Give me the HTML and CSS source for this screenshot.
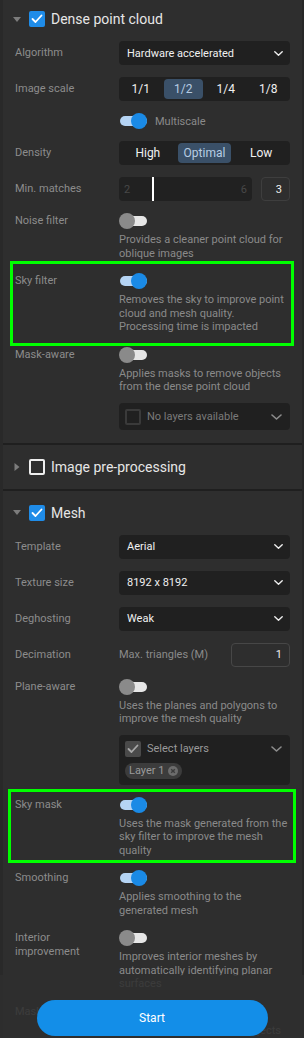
FILE: index.html
```html
<!DOCTYPE html>
<html lang="en">
<head>
  <meta charset="UTF-8" />
  <title>Processing options</title>
  <link rel="stylesheet" href="styles.css">
</head>
<body>
  <div class="panel">

    <!-- Dense point cloud -->
    <section class="section">
      <div class="section-head">
        <svg class="caret" width="8" height="5" viewBox="0 0 8 5"><polygon points="0,0 8,0 4,5" /></svg>
        <span class="check on"><svg width="12" height="10" viewBox="0 0 12 10"><polyline points="1.5,5 4.5,8 10.5,1.5" /></svg></span>
        <span class="section-title">Dense point cloud</span>
      </div>
      <div class="rows">
        <div class="row mid">
          <div class="label">Algorithm</div>
          <div class="control">
            <div class="select"><span>Hardware accelerated</span><svg class="chev" width="9" height="5" viewBox="0 0 9 5"><polyline points="0.8,0.8 4.5,4.2 8.2,0.8" /></svg></div>
          </div>
        </div>
        <div class="row mid">
          <div class="label">Image scale</div>
          <div class="control">
            <div class="segmented four">
              <span>1/1</span><span class="active">1/2</span><span>1/4</span><span>1/8</span>
            </div>
          </div>
        </div>
        <div class="row mid">
          <div class="label"></div>
          <div class="control inline">
            <span class="toggle on"><span class="knob"></span></span>
            <span class="inline-text">Multiscale</span>
          </div>
        </div>
        <div class="row mid">
          <div class="label">Density</div>
          <div class="control">
            <div class="segmented three">
              <span>High</span><span class="active">Optimal</span><span>Low</span>
            </div>
          </div>
        </div>
        <div class="row mid">
          <div class="label">Min. matches</div>
          <div class="control inline">
            <div class="slider">
              <span class="tick">2</span>
              <span class="thumb"></span>
              <span class="tick">6</span>
            </div>
            <div class="number small">3</div>
          </div>
        </div>
        <div class="row">
          <div class="label">Noise filter</div>
          <div class="control">
            <span class="toggle"><span class="knob"></span></span>
            <p class="desc">Provides a cleaner point cloud for oblique images</p>
          </div>
        </div>
        <div class="row highlight hl-sky">
          <div class="label">Sky filter</div>
          <div class="control">
            <span class="toggle on"><span class="knob"></span></span>
            <p class="desc">Removes the sky to improve point cloud and mesh quality. Processing time is impacted</p>
          </div>
        </div>
        <div class="row">
          <div class="label">Mask-aware</div>
          <div class="control">
            <span class="toggle"><span class="knob"></span></span>
            <p class="desc">Applies masks to remove objects from the dense point cloud</p>
            <div class="layers disabled">
              <div class="layers-top">
                <span class="check empty"></span>
                <span class="layers-text">No layers available</span>
                <svg class="chev big" width="11" height="6" viewBox="0 0 11 6"><polyline points="1,1 5.5,5 10,1" /></svg>
              </div>
            </div>
          </div>
        </div>
      </div>
    </section>

    <!-- Image pre-processing -->
    <section class="section">
      <div class="section-head">
        <svg class="caret" width="8" height="8" viewBox="0 0 8 8"><polygon points="1.5,0 6.5,4 1.5,8" /></svg>
        <span class="check off"></span>
        <span class="section-title">Image pre-processing</span>
      </div>
    </section>

    <!-- Mesh -->
    <section class="section">
      <div class="section-head">
        <svg class="caret" width="8" height="5" viewBox="0 0 8 5"><polygon points="0,0 8,0 4,5" /></svg>
        <span class="check on"><svg width="12" height="10" viewBox="0 0 12 10"><polyline points="1.5,5 4.5,8 10.5,1.5" /></svg></span>
        <span class="section-title">Mesh</span>
      </div>
      <div class="rows">
        <div class="row mid">
          <div class="label">Template</div>
          <div class="control">
            <div class="select"><span>Aerial</span><svg class="chev" width="9" height="5" viewBox="0 0 9 5"><polyline points="0.8,0.8 4.5,4.2 8.2,0.8" /></svg></div>
          </div>
        </div>
        <div class="row mid">
          <div class="label">Texture size</div>
          <div class="control">
            <div class="select"><span>8192 x 8192</span><svg class="chev" width="9" height="5" viewBox="0 0 9 5"><polyline points="0.8,0.8 4.5,4.2 8.2,0.8" /></svg></div>
          </div>
        </div>
        <div class="row mid">
          <div class="label">Deghosting</div>
          <div class="control">
            <div class="select"><span>Weak</span><svg class="chev" width="9" height="5" viewBox="0 0 9 5"><polyline points="0.8,0.8 4.5,4.2 8.2,0.8" /></svg></div>
          </div>
        </div>
        <div class="row mid">
          <div class="label">Decimation</div>
          <div class="control inline spread">
            <span class="inline-text flat">Max. triangles (M)</span>
            <div class="number wide">1</div>
          </div>
        </div>
        <div class="row">
          <div class="label">Plane-aware</div>
          <div class="control">
            <span class="toggle"><span class="knob"></span></span>
            <p class="desc">Uses the planes and polygons to improve the mesh quality</p>
            <div class="layers">
              <div class="layers-top">
                <span class="check grey"><svg width="12" height="10" viewBox="0 0 12 10"><polyline points="1.5,5 4.5,8 10.5,1.5" /></svg></span>
                <span class="layers-text">Select layers</span>
                <svg class="chev big" width="11" height="6" viewBox="0 0 11 6"><polyline points="1,1 5.5,5 10,1" /></svg>
              </div>
              <span class="chip">Layer 1
                <svg width="10" height="10" viewBox="0 0 10 10"><circle cx="5" cy="5" r="5" /><path d="M3.2 3.2 L6.8 6.8 M6.8 3.2 L3.2 6.8" /></svg>
              </span>
            </div>
          </div>
        </div>
        <div class="row highlight hl-mask">
          <div class="label">Sky mask</div>
          <div class="control">
            <span class="toggle on"><span class="knob"></span></span>
            <p class="desc">Uses the mask generated from the sky filter to improve the mesh quality</p>
          </div>
        </div>
        <div class="row">
          <div class="label">Smoothing</div>
          <div class="control">
            <span class="toggle on"><span class="knob"></span></span>
            <p class="desc">Applies smoothing to the generated mesh</p>
          </div>
        </div>
        <div class="row">
          <div class="label">Interior improvement</div>
          <div class="control">
            <span class="toggle"><span class="knob"></span></span>
            <p class="desc">Improves interior meshes by automatically identifying planar surfaces</p>
          </div>
        </div>
        <div class="row">
          <div class="label">Mask-aware</div>
          <div class="control">
            <span class="toggle"><span class="knob"></span></span>
            <p class="desc">Applies masks to remove objects</p>
          </div>
        </div>
      </div>
    </section>
  </div>

  <div class="footer">
    <button class="start" type="button">Start</button>
  </div>
</body>
</html>
```

FILE: styles.css
```css
* {
  box-sizing: border-box;
}

html, body {
  margin: 0;
  height: 100%;
  overflow: hidden;
}

body {
  background-color: #262626;
  font-family: Roboto, "Liberation Sans", sans-serif;
  color: #8c8c8c;
}

.panel {
  margin-top: -3px;
  background-color: #2e2e2e;
  border-left: 3px solid #292929;
  border-right: 2px solid #262626;
}

.section + .section {
  border-top: 2px solid #1f1f1f;
}

/* Section header */
.section-head {
  display: flex;
  align-items: center;
  padding: 14px 0 14px 10px;
}

.caret {
  fill: #7c7c7c;
  margin-right: 8px;
}

.section-title {
  font-size: 14px;
  color: #e6e6e6;
  margin-left: 6px;
  line-height: 16px;
}

.check {
  width: 16px;
  height: 16px;
  border-radius: 2px;
  display: inline-flex;
  align-items: center;
  justify-content: center;
  flex-shrink: 0;
}

.check svg {
  fill: none;
  stroke-width: 1.8;
  stroke-linecap: round;
  stroke-linejoin: round;
}

.check.on {
  background-color: #1f8ce8;
}

.check.on svg {
  stroke: #ffffff;
}

.check.off {
  border: 2px solid #eeeeee;
}

.check.empty {
  border: 2px solid #3a3a3a;
}

.check.grey {
  background-color: #4a4a4a;
}

.check.grey svg {
  stroke: #a8a8a8;
}

/* Rows */
.rows {
  display: flex;
  flex-direction: column;
  gap: 12px;
  padding: 0 12px 13px 12px;
}

.row {
  display: flex;
  align-items: flex-start;
  position: relative;
}

.row.mid {
  align-items: center;
}

.label {
  width: 96px;
  margin-right: 8px;
  flex-shrink: 0;
  font-size: 11px;
  line-height: 14px;
  color: #8c8c8c;
}

.row:not(.mid) .label {
  padding-top: 1px;
}

.control {
  flex: 1;
  min-width: 0;
}

.control.inline {
  display: flex;
  align-items: center;
}

.control.spread {
  justify-content: space-between;
}

.inline-text {
  font-size: 11px;
  color: #8a8a8a;
  margin-left: 8px;
}

.inline-text.flat {
  margin-left: 0;
}

/* Select */
.select {
  height: 24px;
  background-color: #202020;
  border-radius: 4px;
  display: flex;
  align-items: center;
  justify-content: space-between;
  padding: 0 7px 0 8px;
  font-size: 11px;
  color: #f0f0f0;
}

.chev {
  fill: none;
  stroke: #eeeeee;
  stroke-width: 1.4;
  stroke-linecap: round;
  stroke-linejoin: round;
}

.chev.big {
  stroke: #8c8c8c;
  stroke-width: 1.6;
}

/* Segmented */
.segmented {
  height: 24px;
  background-color: #202020;
  border-radius: 4px;
  padding: 2px;
  display: grid;
  gap: 3px;
  font-size: 12px;
  color: #f0f0f0;
}

.segmented.four {
  grid-template-columns: repeat(4, 1fr);
}

.segmented.three {
  grid-template-columns: repeat(3, 1fr);
}

.segmented span {
  display: flex;
  align-items: center;
  justify-content: center;
  border-radius: 4px;
}

.segmented span.active {
  background-color: #3a5068;
  color: #b7cde3;
}

/* Toggle */
.toggle {
  display: block;
  position: relative;
  width: 28px;
  height: 16px;
  flex-shrink: 0;
}

.toggle::before {
  content: "";
  position: absolute;
  left: 1px;
  right: 0;
  top: 3px;
  height: 10px;
  border-radius: 5px;
  background-color: #e6e6e6;
}

.toggle .knob {
  position: absolute;
  left: 0;
  top: 0;
  width: 16px;
  height: 16px;
  border-radius: 50%;
  background-color: #8a8a8a;
}

.toggle.on::before {
  background-color: #b5d4f4;
}

.toggle.on .knob {
  left: 12px;
  background-color: #1a8ae6;
}

.control.inline .toggle {
  display: inline-block;
}

.desc {
  margin: 4px 0 0 0;
  padding-bottom: 1px;
  font-size: 11px;
  line-height: 13.5px;
  color: #8a8a8a;
}

/* Slider + numbers */
.slider {
  flex: 1;
  height: 24px;
  background-color: #212121;
  border-radius: 4px;
  position: relative;
  display: flex;
  align-items: center;
  justify-content: space-between;
  padding: 0 5px;
  font-size: 11px;
  color: #484848;
}

.slider .thumb {
  position: absolute;
  left: 33px;
  top: 0;
  width: 2px;
  height: 100%;
  background-color: #ffffff;
}

.number {
  height: 24px;
  border: 1px solid #3e3e3e;
  border-radius: 4px;
  display: flex;
  align-items: center;
  justify-content: flex-end;
  padding-right: 7px;
  font-size: 11px;
  color: #f0f0f0;
}

.number.small {
  width: 29px;
  margin-left: 9px;
}

.number.wide {
  width: 59px;
  border-color: #474747;
}

/* Layer picker */
.layers {
  margin-top: 8px;
  background-color: #202020;
  border-radius: 4px;
  padding: 6px 8px 6px 6px;
  display: flex;
  flex-direction: column;
  align-items: flex-start;
  gap: 6px;
}

.layers.disabled {
  padding: 6px 8px 5px 6px;
}

.layers-top {
  width: 100%;
  display: flex;
  align-items: center;
}

.layers-text {
  flex: 1;
  margin-left: 6px;
  font-size: 11px;
  color: #9a9a9a;
}

.layers.disabled .layers-text {
  color: #7a7a7a;
}

.chip {
  display: inline-flex;
  align-items: center;
  gap: 4px;
  height: 16px;
  padding: 0 4px 0 4px;
  border-radius: 8px;
  background-color: #3c3c3c;
  font-size: 11px;
  color: #9a9a9a;
}

.chip svg circle {
  fill: #6c6c6c;
}

.chip svg path {
  stroke: #3c3c3c;
  stroke-width: 1.4;
}

/* Green highlight frames */
.highlight::after {
  content: "";
  position: absolute;
  border: 3px solid #00ff00;
  pointer-events: none;
}

.hl-sky::after {
  top: -12px;
  bottom: -11px;
  left: -5px;
  right: -4px;
}

.hl-mask::after {
  top: -8px;
  bottom: -5px;
  left: -7px;
  right: -6px;
}

/* Start footer */
.footer {
  position: fixed;
  left: 0;
  right: 0;
  bottom: 0;
  height: 63px;
  padding-top: 25px;
  background-color: rgba(46, 46, 46, 0.86);
}

.start {
  display: block;
  width: 231px;
  height: 36px;
  margin: 0 auto;
  border: none;
  border-radius: 18px;
  background-color: #138ee8;
  color: #ffffff;
  font-family: Roboto, "Liberation Sans", sans-serif;
  font-size: 12px;
  cursor: pointer;
}
```
